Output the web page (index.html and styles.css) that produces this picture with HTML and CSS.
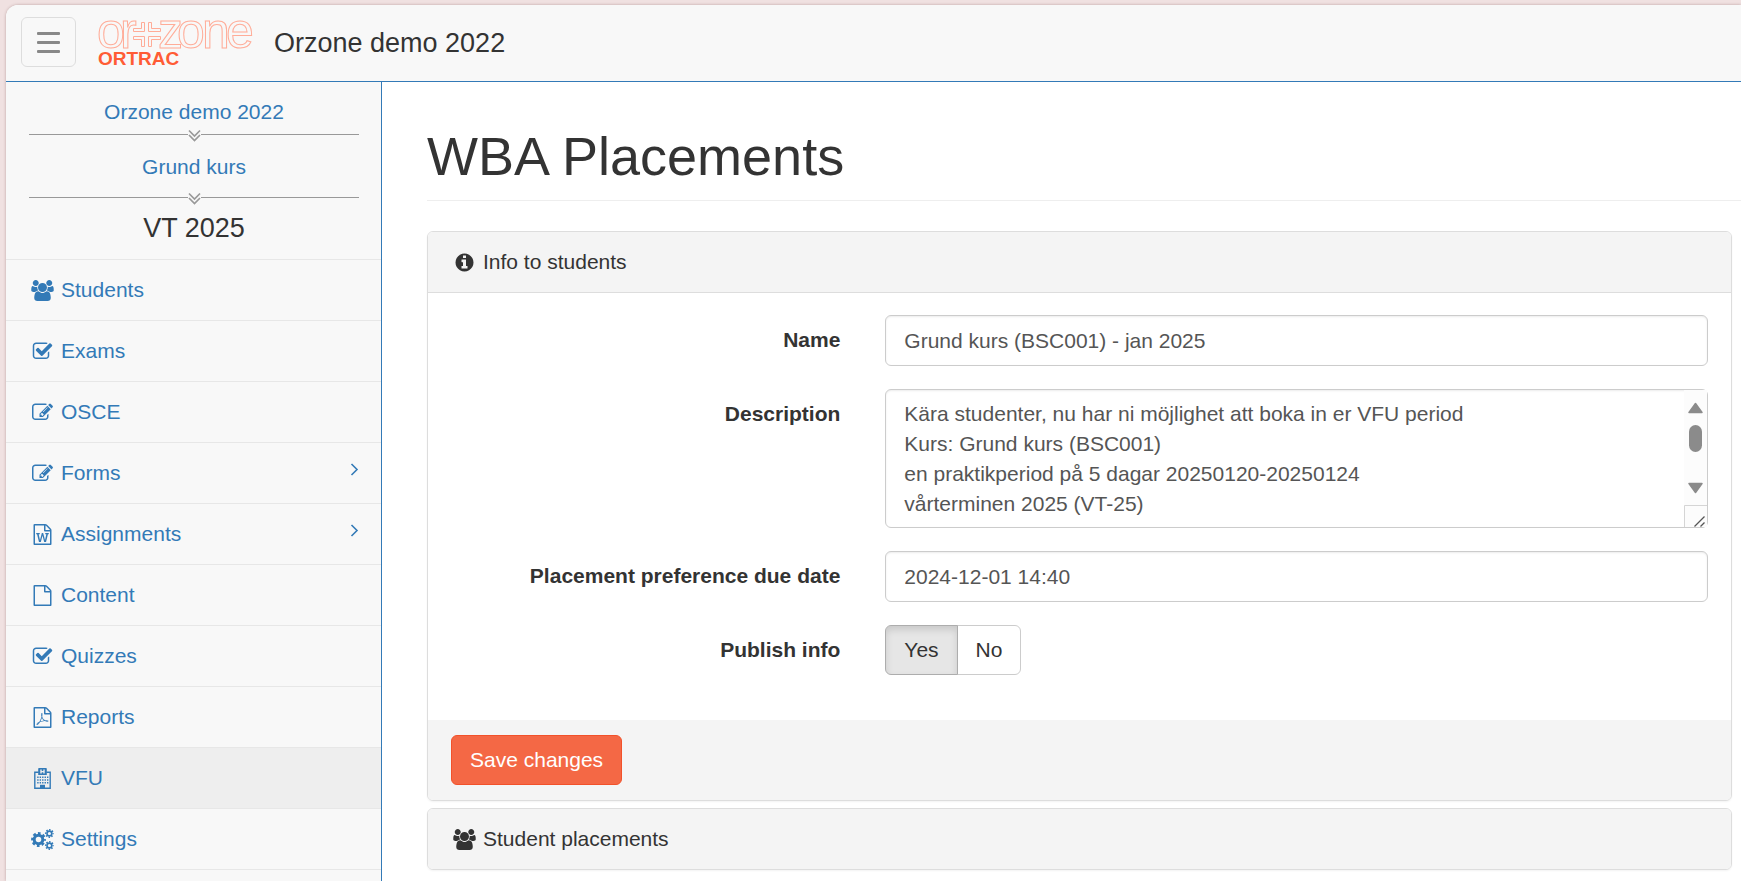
FILE: index.html
```html
<!DOCTYPE html>
<html lang="en">
<head>
  <meta charset="UTF-8" />
  <meta name="viewport" content="width=device-width, initial-scale=1.0"/>
  <title>WBA Placements</title>
  <link rel="stylesheet" href="styles.css">
</head>
<body>
  <!-- Icon symbols -->
  <svg class="symbols" aria-hidden="true">
    <symbol id="users" viewBox="0 0 2048 1792"><path d="M657 896q-162 5-265 128h-134q-82 0-138-40.5t-56-118.5q0-353 124-353 6 0 43.5 21t97.5 42.5 119 21.5q67 0 133-23-5 37-5 66 0 139 81 256zm1071 637q0 120-73 189.5t-194 69.5h-874q-121 0-194-69.5t-73-189.5q0-53 3.5-103.5t14-109 26.5-108.5 43-97.5 62-81 85.5-53.5 111.5-20q10 0 43 21.5t73 48 107 48 135 21.5 135-21.5 107-48 73-48 43-21.5q61 0 111.5 20t85.5 53.5 62 81 43 97.5 26.5 108.5 14 109 3.5 103.5zm-1024-1277q0 106-75 181t-181 75-181-75-75-181 75-181 181-75 181 75 75 181zm704 384q0 159-112.5 271.5t-271.5 112.5-271.5-112.5-112.5-271.5 112.5-271.5 271.5-112.5 271.5 112.5 112.5 271.5zm576 225q0 78-56 118.5t-138 40.5h-134q-103-123-265-128 81-117 81-256 0-29-5-66 66 23 133 23 59 0 119-21.5t97.5-42.5 43.5-21q124 0 124 353zm-128-609q0 106-75 181t-181 75-181-75-75-181 75-181 181-75 181 75 75 181z"/></symbol>
    <symbol id="check" viewBox="0 0 1792 1792"><path d="M1472 930v318q0 119-84.5 203.5t-203.5 84.5h-832q-119 0-203.5-84.5t-84.5-203.5v-832q0-119 84.5-203.5t203.5-84.5h832q63 0 117 25 15 7 18 23 3 17-9 29l-49 49q-10 10-23 10-3 0-9-2-23-6-45-6h-832q-66 0-113 47t-47 113v832q0 66 47 113t113 47h832q66 0 113-47t47-113v-254q0-13 9-22l64-64q10-10 23-10 6 0 12 3 20 8 20 29zm231-489l-814 814q-24 24-57 24t-57-24l-430-430q-24-24-24-57t24-57l110-110q24-24 57-24t57 24l263 263 647-647q24-24 57-24t57 24l110 110q24 24 24 57t-24 57z"/></symbol>
    <symbol id="edit" viewBox="0 0 1792 1792"><path d="M888 1184l116-116-152-152-116 116v56h96v96h56zm440-720q-16-16-33 1l-350 350q-17 17-1 33t33-1l350-350q17-17 1-33zm80 594v190q0 119-84.5 203.5t-203.5 84.5h-832q-119 0-203.5-84.5t-84.5-203.5v-832q0-119 84.5-203.5t203.5-84.5h832q63 0 117 25 15 7 18 23 3 17-9 29l-49 49q-14 14-32 8-23-6-45-6h-832q-66 0-113 47t-47 113v832q0 66 47 113t113 47h832q66 0 113-47t47-113v-126q0-13 9-22l64-64q15-15 35-7t20 29zm-96-738l288 288-672 672h-288v-288zm444 132l-92 92-288-288 92-92q28-28 68-28t68 28l152 152q28 28 28 68t-28 68z"/></symbol>
    <symbol id="file" viewBox="0 0 1792 1792"><path d="M1596 380q28 28 48 76t20 88v1152q0 40-28 68t-68 28h-1344q-40 0-68-28t-28-68v-1600q0-40 28-68t68-28h896q40 0 88 20t76 48zm-444-244v376h376q-10-29-22-41l-313-313q-12-12-41-22zm384 1528v-1024h-416q-40 0-68-28t-28-68v-416h-768v1536h1280z"/></symbol>
    <symbol id="file-word" viewBox="0 0 1792 1792"><path d="M1596 380q28 28 48 76t20 88v1152q0 40-28 68t-68 28h-1344q-40 0-68-28t-28-68v-1600q0-40 28-68t68-28h896q40 0 88 20t76 48zm-444-244v376h376q-10-29-22-41l-313-313q-12-12-41-22zm384 1528v-1024h-416q-40 0-68-28t-28-68v-416h-768v1536h1280zm-1175-896v107h70l164 661h159l128-485q7-20 10-46 2-16 2-24h4l3 24q1 3 3.5 20t5.5 26l128 485h159l164-661h70v-107h-300v107h90l-99 438q-5 20-7 46l-2 21h-4l-3-21q-1-5-4-21t-5-25l-144-545h-114l-144 545q-2 9-4.5 24.5t-3.5 21.5l-4 21h-4l-2-21q-2-26-7-46l-99-438h90v-107h-300z"/></symbol>
    <symbol id="file-pdf" viewBox="0 0 1792 1792"><path d="M1596 380q28 28 48 76t20 88v1152q0 40-28 68t-68 28h-1344q-40 0-68-28t-28-68v-1600q0-40 28-68t68-28h896q40 0 88 20t76 48zm-444-244v376h376q-10-29-22-41l-313-313q-12-12-41-22zm384 1528v-1024h-416q-40 0-68-28t-28-68v-416h-768v1536h1280zm-514-593q33 26 84 56 59-7 117-7 147 0 177 49 16 22 2 52 0 1-1 2l-2 2v1q-6 38-71 38-48 0-115-20t-130-53q-221 24-392 83-153 262-242 262-15 0-28-7l-24-12q-1-1-6-5-10-10-6-36 9-40 56-91.5t132-96.5q14-9 23 6 2 2 2 4 52-85 107-197 68-136 104-262-24-82-30.5-159.5t6.5-127.5q11-40 42-40h22q23 0 35 15 18 21 9 68-2 6-4 8 1 3 1 8v30q-2 123-14 192 55 164 146 238zm-576 411q52-24 137-158-51 40-87.5 84t-49.5 74zm398-920q-15 42-2 132 1-7 7-44 0-3 7-43 1-4 4-8-1-1-1-2t-1-2-1-2q-1-22-13-36 0 1-1 2v2zm-124 661q135-54 284-81-2-1-13-9.5t-16-13.5q-76-67-127-176-27 86-83 197-30 56-45 83zm646-16q-24-24-140-24 76 28 124 28 14 0 18-1 0-1-2-3z"/></symbol>
    <symbol id="hospital" viewBox="0 0 21 21">
      <path d="M6.7 4.3H2.8V20.3H18.2V4.3H14.3" fill="none" stroke="currentColor" stroke-width="1.4"/>
      <path d="M7 0H14Q14.8 0 14.8 .8V7H6.2V.8Q6.2 0 7 0ZM8.3 1.6V5.6H9.7V4.2H11.3V5.6H12.7V1.6H11.3V3H9.7V1.6Z" fill-rule="evenodd"/>
      <path d="M5.2 9.2H16.5M5.2 12H16.5M5.2 14.8H16.5" fill="none" stroke="currentColor" stroke-width="1.4" stroke-dasharray="1.4 1.05"/>
      <path d="M8 16.8H13V21H8Z"/>
    </symbol>
    <symbol id="cogs" viewBox="0 0 23 21">
      <g fill="none" stroke="currentColor">
        <circle cx="7.5" cy="10.5" r="4.3" stroke-width="3"/>
        <circle cx="7.5" cy="10.5" r="6.2" stroke-width="2.4" stroke-dasharray="2.7 2.17" stroke-dashoffset="1.35"/>
        <circle cx="18.4" cy="4.5" r="2.4" stroke-width="1.6"/>
        <circle cx="18.4" cy="4.5" r="3.7" stroke-width="1.5" stroke-dasharray="1.5 1.4" stroke-dashoffset=".75"/>
        <circle cx="18.4" cy="16.5" r="2.4" stroke-width="1.6"/>
        <circle cx="18.4" cy="16.5" r="3.7" stroke-width="1.5" stroke-dasharray="1.5 1.4" stroke-dashoffset=".75"/>
      </g>
    </symbol>
    <symbol id="info" viewBox="0 0 1792 1792"><path d="M1152 1376v-160q0-14-9-23t-23-9h-96v-512q0-14-9-23t-23-9h-320q-14 0-23 9t-9 23v160q0 14 9 23t23 9h96v320h-96q-14 0-23 9t-9 23v160q0 14 9 23t23 9h448q14 0 23-9t9-23zm-128-896v-160q0-14-9-23t-23-9h-192q-14 0-23 9t-9 23v160q0 14 9 23t23 9h192q14 0 23-9t9-23zm640 416q0 209-103 385.5t-279.5 279.5-385.5 103-385.5-103-279.5-279.5-103-385.5 103-385.5 279.5-279.5 385.5-103 385.5 103 279.5 279.5 103 385.5z"/></symbol>
    <symbol id="angle-right" viewBox="0 0 9 13"><path d="M1.5 1L7 6.5L1.5 12" fill="none" stroke="currentColor" stroke-width="1.6"/></symbol>
    <symbol id="angles-down" viewBox="0 0 13 15"><path d="M1 3.5L6.5 9L12 3.5M1 8L6.5 13.5L12 8" fill="none" stroke="currentColor" stroke-width="1.7"/></symbol>
  </svg>

  <div class="window">
    <header class="navbar">
      <button class="toggle" type="button" aria-label="Toggle menu">
        <span class="bar"></span>
        <span class="bar"></span>
        <span class="bar"></span>
      </button>
      <a class="brand" href="#" aria-label="Orzone Ortrac">
        <svg class="logo" viewBox="0 0 156 50">
          <text class="logo-outline" y="31" x="-1 22">or</text>
          <text class="logo-outline" y="31" x="60 79 104 128">zone</text>
          <path class="logo-cross" d="M43.5 5.5H46.5V14.5H35.5V11.5H43.5ZM50.5 5.5H53.5V11.5H62.5V14.5H50.5ZM35.5 19.5H46.5V29.5H43.5V22.5H35.5ZM50.5 19.5H62.5V22.5H53.5V29.5H50.5Z"/>
          <text class="logo-name" x="0" y="48">ORTRAC</text>
        </svg>
      </a>
      <span class="title">Orzone demo 2022</span>
    </header>

    <div class="layout">
      <nav class="sidebar">
        <div class="context">
          <a href="#">Orzone demo 2022</a>
          <div class="divider first"><svg><use href="#angles-down"/></svg></div>
          <a href="#">Grund kurs</a>
          <div class="divider"><svg><use href="#angles-down"/></svg></div>
          <div class="term">VT 2025</div>
        </div>
        <ul class="menu">
          <li><a href="#"><svg class="icon"><use href="#users"/></svg>Students</a></li>
          <li><a href="#"><svg class="icon"><use href="#check"/></svg>Exams</a></li>
          <li><a href="#"><svg class="icon"><use href="#edit"/></svg>OSCE</a></li>
          <li><a href="#"><svg class="icon"><use href="#edit"/></svg>Forms<svg class="arrow"><use href="#angle-right"/></svg></a></li>
          <li><a href="#"><svg class="icon"><use href="#file-word"/></svg>Assignments<svg class="arrow"><use href="#angle-right"/></svg></a></li>
          <li><a href="#"><svg class="icon"><use href="#file"/></svg>Content</a></li>
          <li><a href="#"><svg class="icon"><use href="#check"/></svg>Quizzes</a></li>
          <li><a href="#"><svg class="icon"><use href="#file-pdf"/></svg>Reports</a></li>
          <li><a class="active" href="#"><svg class="icon"><use href="#hospital"/></svg>VFU</a></li>
          <li><a href="#"><svg class="icon"><use href="#cogs"/></svg>Settings</a></li>
        </ul>
      </nav>

      <main class="content">
        <h1>WBA Placements</h1>

        <form class="panel">
          <div class="panel-heading"><svg class="icon"><use href="#info"/></svg>Info to students</div>
          <div class="panel-body">
            <div class="row">
              <label for="name">Name</label>
              <div class="field"><input class="control" type="text" id="name" value="Grund kurs (BSC001) - jan 2025"></div>
            </div>
            <div class="row">
              <label for="description">Description</label>
              <div class="field">
                <div class="area">
                  <textarea class="control" id="description" rows="4">Kära studenter, nu har ni möjlighet att boka in er VFU period
Kurs: Grund kurs (BSC001)
en praktikperiod på 5 dagar 20250120-20250124
vårterminen 2025 (VT-25)</textarea>
                  <svg class="scroll" viewBox="0 0 23 137" aria-hidden="true">
                    <rect width="23" height="137" fill="#fcfcfc"/>
                    <path d="M11.5 13.5L18 22.5H5ZM11.5 102.5L18 93.5H5Z" fill="#8b8b8b" stroke="#8b8b8b" stroke-width="1.5" stroke-linejoin="round"/>
                    <rect x="5" y="35" width="13" height="27" rx="6.5" fill="#8b8b8b"/>
                    <path d="M23 115.5H.5V137" fill="none" stroke="#d5d5d5"/>
                    <path d="M10.5 136.5L20.5 126.5M16.5 136.5L20.5 132.5" stroke="#555" stroke-width="1.3"/>
                  </svg>
                </div>
              </div>
            </div>
            <div class="row">
              <label for="due">Placement preference due date</label>
              <div class="field"><input class="control" type="text" id="due" value="2024-12-01 14:40"></div>
            </div>
            <div class="row">
              <span class="label" id="publish">Publish info</span>
              <div class="field">
                <div class="btn-group" role="radiogroup" aria-labelledby="publish">
                  <input type="radio" name="publish" id="publish-yes" checked>
                  <label for="publish-yes">Yes</label>
                  <input type="radio" name="publish" id="publish-no">
                  <label for="publish-no">No</label>
                </div>
              </div>
            </div>
          </div>
          <div class="panel-footer">
            <button class="save" type="submit">Save changes</button>
          </div>
        </form>

        <section class="panel">
          <div class="panel-heading"><svg class="icon"><use href="#users"/></svg>Student placements</div>
        </section>
      </main>
    </div>
  </div>
</body>
</html>
```

FILE: styles.css
```css
* {
  box-sizing: border-box;
}
body {
  margin: 0;
  padding: 5px 0 0 6px;
  background-color: #f0e1e1;
  color: #333;
  font-family: "Liberation Sans", Arial, sans-serif;
  font-size: 21px;
  line-height: 30px;
  height: 100vh;
  overflow: hidden;
}
a {
  color: #337ab7;
  text-decoration: none;
}
.symbols {
  display: none;
}
.window {
  display: flex;
  flex-direction: column;
  height: 100%;
  background-color: #fff;
  border-top-left-radius: 12px;
  box-shadow: 0 0 3px rgba(90, 40, 40, 0.35);
  overflow: hidden;
}

/* Top bar */
.navbar {
  display: flex;
  align-items: center;
  padding: 12px 15px 14px;
  background-color: #f8f8f8;
  border-bottom: 1px solid #337ab7;
}
.toggle {
  display: flex;
  flex-direction: column;
  justify-content: center;
  align-items: center;
  gap: 6px;
  width: 55px;
  height: 50px;
  padding: 0;
  background: transparent;
  border: 1px solid #ddd;
  border-radius: 6px;
}
.bar {
  width: 23px;
  height: 3px;
  border-radius: 1px;
  background-color: #888;
}
.brand {
  margin: 0 20px 0 22px;
}
.logo {
  display: block;
  width: 156px;
  height: 50px;
  overflow: visible;
}
.logo-outline {
  font-size: 50px;
  fill: none;
  stroke: #ffac98;
}
.logo-cross {
  fill: none;
  stroke: #ffac98;
}
.logo-name {
  font-size: 19px;
  font-weight: bold;
  fill: #ff5c35;
}
.title {
  padding-top: 2px;
  font-size: 27px;
}

.layout {
  display: flex;
  flex: 1;
  min-height: 0;
}

/* Sidebar */
.sidebar {
  flex: none;
  width: 376px;
  background-color: #f8f8f8;
  border-right: 1px solid #337ab7;
}
.context {
  padding: 15px 22px 16px 23px;
  text-align: center;
}
.context a {
  display: block;
}
.divider {
  display: flex;
  align-items: center;
  margin: 8px 0;
  color: #999;
}
.divider.first {
  margin: 0 0 10px;
}
.divider::before,
.divider::after {
  content: "";
  flex: 1;
  height: 1px;
  background-color: #999;
}
.divider svg {
  width: 13px;
  height: 15px;
}
.term {
  font-size: 27px;
}
.menu {
  margin: 0;
  padding: 0;
  list-style: none;
  border-top: 1px solid #e7e7e7;
}
.menu li {
  border-bottom: 1px solid #e7e7e7;
}
.menu a {
  display: flex;
  align-items: center;
  padding: 15px 22px 15px 23px;
}
.menu .active {
  background-color: #eee;
}
.icon {
  width: 27px;
  height: 21px;
  margin-right: 5px;
  fill: currentColor;
}
.arrow {
  width: 9px;
  height: 13px;
  margin: 0 0 8px auto;
}

/* Main column */
.content {
  flex: 1;
  min-width: 0;
  padding-left: 45px;
}
h1 {
  margin: 45px 0 30px;
  padding-bottom: 14px;
  border-bottom: 1px solid #eee;
  font-size: 54px;
  font-weight: normal;
  line-height: 59px;
}
.panel {
  margin: 0 9px 7px 0;
  border: 1px solid #ddd;
  border-radius: 6px;
  box-shadow: 0 1px 2px rgba(0, 0, 0, 0.05);
  overflow: hidden;
}
.panel-heading {
  display: flex;
  align-items: center;
  padding: 15px 23px;
  background-color: #f4f4f4;
}
.panel-body {
  padding: 22px 0;
  border-top: 1px solid #ddd;
}
.panel-footer {
  padding: 15px 23px;
  background-color: #f4f4f4;
}
.row {
  display: grid;
  grid-template-columns: 1fr 2fr;
  margin-bottom: 23px;
}
.row > label,
.label {
  padding: 10px 22px 0;
  font-weight: bold;
  text-align: right;
}
.field {
  padding: 0 23px;
}
.control {
  display: block;
  width: 100%;
  height: 51px;
  padding: 9px 18px;
  border: 1px solid #ccc;
  border-radius: 6px;
  box-shadow: inset 0 1px 2px rgba(0, 0, 0, 0.08);
  background-color: #fff;
  color: #555;
  font: inherit;
}
.area {
  position: relative;
}
textarea.control {
  height: 139px;
  resize: none;
  overflow: hidden;
}
.scroll {
  position: absolute;
  top: 1px;
  right: 1px;
  width: 23px;
  height: 137px;
}

.btn-group {
  display: flex;
}
.btn-group input {
  position: absolute;
  opacity: 0;
}
.btn-group label {
  padding: 9px 18px;
  border: 1px solid #ccc;
  border-radius: 0 6px 6px 0;
  cursor: pointer;
}
.btn-group label:first-of-type {
  border-radius: 6px 0 0 6px;
  margin-right: -1px;
}
.btn-group input:checked + label {
  position: relative;
  background-color: #e6e6e6;
  border-color: #adadad;
  box-shadow: inset 0 4px 7px rgba(0, 0, 0, 0.125);
}
.save {
  display: block;
  padding: 9px 18px;
  border: 1px solid #f2512a;
  border-radius: 6px;
  background-color: #f46845;
  color: #fff;
  font: inherit;
  cursor: pointer;
}
```
